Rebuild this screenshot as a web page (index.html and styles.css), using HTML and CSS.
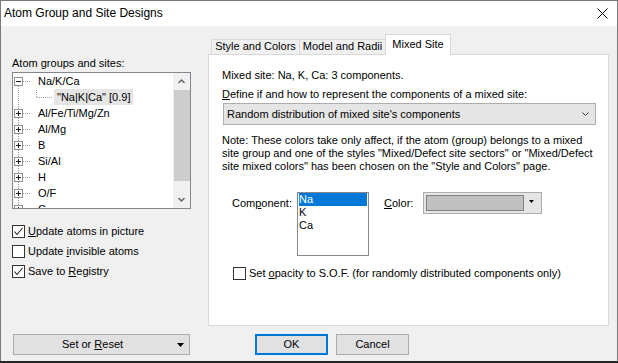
FILE: index.html
```html
<!DOCTYPE html>
<html>
<head>
<meta charset="utf-8">
<title>Atom Group and Site Designs</title>
<link rel="stylesheet" href="styles.css">
</head>
<body>
<div class="window">
  <div class="titlebar">
    <span class="title">Atom Group and Site Designs</span>
    <svg class="close" width="11" height="11" viewBox="0 0 11 11"><path d="M0.5 0.5L10.5 10.5M10.5 0.5L0.5 10.5" stroke="#000" stroke-width="1" fill="none"/></svg>
  </div>
  <div class="client">
    <div class="main">
      <div class="left">
        <div class="groups-label">Atom groups and sites:</div>
        <div class="tree">
          <div class="tree-items">
            <div class="row">
              <svg width="23" height="16"><line x1="5.5" y1="13" x2="5.5" y2="16" class="dot"/><line x1="10" y1="8.5" x2="18" y2="8.5" class="dot"/><rect x="1.5" y="4.5" width="8" height="8" class="bx"/><line x1="3" y1="8.5" x2="8" y2="8.5" class="sign"/></svg>
              <span class="txt">Na/K/Ca</span>
            </div>
            <div class="row child">
              <svg width="41" height="16"><line x1="5.5" y1="1" x2="5.5" y2="16" class="dot"/><line x1="23.5" y1="1" x2="23.5" y2="8" class="dot"/><line x1="24" y1="8.5" x2="40" y2="8.5" class="dot"/></svg>
              <span class="txt">"Na|K|Ca" [0.9]</span>
            </div>
            <div class="row">
              <svg width="23" height="16"><line x1="5.5" y1="1" x2="5.5" y2="4" class="dot"/><line x1="5.5" y1="13" x2="5.5" y2="16" class="dot"/><line x1="10" y1="8.5" x2="18" y2="8.5" class="dot"/><rect x="1.5" y="4.5" width="8" height="8" class="bx"/><line x1="3" y1="8.5" x2="8" y2="8.5" class="sign"/><line x1="5.5" y1="6" x2="5.5" y2="11" class="sign"/></svg>
              <span class="txt">Al/Fe/Ti/Mg/Zn</span>
            </div>
            <div class="row">
              <svg width="23" height="16"><line x1="5.5" y1="1" x2="5.5" y2="4" class="dot"/><line x1="5.5" y1="13" x2="5.5" y2="16" class="dot"/><line x1="10" y1="8.5" x2="18" y2="8.5" class="dot"/><rect x="1.5" y="4.5" width="8" height="8" class="bx"/><line x1="3" y1="8.5" x2="8" y2="8.5" class="sign"/><line x1="5.5" y1="6" x2="5.5" y2="11" class="sign"/></svg>
              <span class="txt">Al/Mg</span>
            </div>
            <div class="row">
              <svg width="23" height="16"><line x1="5.5" y1="1" x2="5.5" y2="4" class="dot"/><line x1="5.5" y1="13" x2="5.5" y2="16" class="dot"/><line x1="10" y1="8.5" x2="18" y2="8.5" class="dot"/><rect x="1.5" y="4.5" width="8" height="8" class="bx"/><line x1="3" y1="8.5" x2="8" y2="8.5" class="sign"/><line x1="5.5" y1="6" x2="5.5" y2="11" class="sign"/></svg>
              <span class="txt">B</span>
            </div>
            <div class="row">
              <svg width="23" height="16"><line x1="5.5" y1="1" x2="5.5" y2="4" class="dot"/><line x1="5.5" y1="13" x2="5.5" y2="16" class="dot"/><line x1="10" y1="8.5" x2="18" y2="8.5" class="dot"/><rect x="1.5" y="4.5" width="8" height="8" class="bx"/><line x1="3" y1="8.5" x2="8" y2="8.5" class="sign"/><line x1="5.5" y1="6" x2="5.5" y2="11" class="sign"/></svg>
              <span class="txt">Si/Al</span>
            </div>
            <div class="row">
              <svg width="23" height="16"><line x1="5.5" y1="1" x2="5.5" y2="4" class="dot"/><line x1="5.5" y1="13" x2="5.5" y2="16" class="dot"/><line x1="10" y1="8.5" x2="18" y2="8.5" class="dot"/><rect x="1.5" y="4.5" width="8" height="8" class="bx"/><line x1="3" y1="8.5" x2="8" y2="8.5" class="sign"/><line x1="5.5" y1="6" x2="5.5" y2="11" class="sign"/></svg>
              <span class="txt">H</span>
            </div>
            <div class="row">
              <svg width="23" height="16"><line x1="5.5" y1="1" x2="5.5" y2="4" class="dot"/><line x1="5.5" y1="13" x2="5.5" y2="16" class="dot"/><line x1="10" y1="8.5" x2="18" y2="8.5" class="dot"/><rect x="1.5" y="4.5" width="8" height="8" class="bx"/><line x1="3" y1="8.5" x2="8" y2="8.5" class="sign"/><line x1="5.5" y1="6" x2="5.5" y2="11" class="sign"/></svg>
              <span class="txt">O/F</span>
            </div>
            <div class="row">
              <svg width="23" height="16"><line x1="5.5" y1="1" x2="5.5" y2="4" class="dot"/><line x1="5.5" y1="13" x2="5.5" y2="16" class="dot"/><line x1="10" y1="8.5" x2="18" y2="8.5" class="dot"/><rect x="1.5" y="4.5" width="8" height="8" class="bx"/><line x1="3" y1="8.5" x2="8" y2="8.5" class="sign"/><line x1="5.5" y1="6" x2="5.5" y2="11" class="sign"/></svg>
              <span class="txt">C</span>
            </div>
          </div>
          <div class="vscroll">
            <div class="sb-btn"><svg width="7" height="5"><polyline points="0.5,4 3.5,1 6.5,4" class="chev"/></svg></div>
            <div class="sb-thumb"></div>
            <div class="sb-track"></div>
            <div class="sb-btn"><svg width="7" height="5"><polyline points="0.5,1 3.5,4 6.5,1" class="chev"/></svg></div>
          </div>
        </div>
        <div class="checks">
          <div class="chk"><span class="box"><svg width="11" height="11"><polyline points="1.5,5.5 4,8.5 9.5,2" class="tick"/></svg></span><span class="chk-text"><u>U</u>pdate atoms in picture</span></div>
          <div class="chk"><span class="box"></span><span class="chk-text">Update <u>i</u>nvisible atoms</span></div>
          <div class="chk"><span class="box"><svg width="11" height="11"><polyline points="1.5,5.5 4,8.5 9.5,2" class="tick"/></svg></span><span class="chk-text">Save to <u>R</u>egistry</span></div>
        </div>
      </div>
      <div class="tabs">
        <div class="tabstrip">
          <div class="tab tab-style">Style and Colors</div>
          <div class="tab tab-model">Model and Radii</div>
          <div class="tab tab-active">Mixed Site</div>
        </div>
        <div class="panel">
          <div class="line">Mixed site: Na, K, Ca: 3 components.</div>
          <div class="line define"><u>D</u>efine if and how to represent the components of a mixed site:</div>
          <div class="combo">
            <span class="combo-text">Random distribution of mixed site's components</span>
            <svg width="7" height="4"><polyline points="0.5,0.5 3.5,3.5 6.5,0.5" class="chev2"/></svg>
          </div>
          <div class="note">Note: These colors take only affect, if the atom (group) belongs to a mixed<br>site group and one of the styles "Mixed/Defect site sectors" or "Mixed/Defect<br>site mixed colors" has been chosen on the "Style and Colors" page.</div>
          <div class="comp-row">
            <div class="comp-label">Com<u>p</u>onent:</div>
            <div class="listbox">
              <div class="item sel">Na</div>
              <div class="item">K</div>
              <div class="item">Ca</div>
            </div>
            <div class="color-label"><u>C</u>olor:</div>
            <div class="colorcombo">
              <div class="swatch"></div>
              <svg class="tri" width="5" height="3"><polygon points="0,0 5,0 2.5,3" fill="#000"/></svg>
            </div>
          </div>
          <div class="opacity-row">
            <span class="box"></span><span class="chk-text">Set <u>o</u>pacity to S.O.F. (for randomly distributed components only)</span>
          </div>
        </div>
      </div>
    </div>
    <div class="buttons">
      <button class="btn btn-menu"><span class="lbl">Set or <u>R</u>eset</span><svg width="7" height="4"><polygon points="0,0 7,0 3.5,4" fill="#000"/></svg></button>
      <button class="btn btn-ok">OK</button>
      <button class="btn btn-cancel">Cancel</button>
    </div>
  </div>
</div>
</body>
</html>
```

FILE: styles.css
```css
* { box-sizing: border-box; }
html, body { margin: 0; padding: 0; }
body {
  width: 618px;
  height: 363px;
  overflow: hidden;
  background: #262626;
  font-family: "Liberation Sans", Arial, sans-serif;
  font-size: 11px;
  line-height: 13px;
  color: #000;
}
.window {
  width: 618px;
  height: 361px;
  background: #f0f0f0;
  border: 1px solid #7a7a7a;
  border-bottom: 0;
  display: flex;
  flex-direction: column;
}
.titlebar {
  flex: none;
  height: 25px;
  background: #fff;
  display: flex;
  align-items: center;
  padding-left: 3px;
}
.title { font-size: 12px; line-height: 15px; }
.close { margin-left: auto; margin-right: 9px; display: block; }
.client { flex: 1; padding: 8px 0 0 11px; }
.main { display: flex; gap: 17px; height: 292px; }

/* left column */
.left { width: 179px; display: flex; flex-direction: column; }
.groups-label { margin-top: 23px; height: 13px; white-space: nowrap; }
.tree {
  margin-top: 2px;
  height: 137px;
  border: 1px solid #828790;
  background: #fff;
  display: flex;
}
.tree-items { width: 160px; overflow: hidden; }
.row { display: flex; height: 16px; flex: none; }
.row svg { display: block; flex: none; }
.row .txt { padding-left: 2px; line-height: 16px; white-space: nowrap; }
.row.child .txt { background: #e5e5e5; padding: 0 3px; }
.dot { stroke: #a0a0a0; stroke-width: 1; stroke-dasharray: 1 1; fill: none; }
.bx { stroke: #919191; fill: #fff; stroke-width: 1; }
.sign { stroke: #1a1a1a; stroke-width: 1; }
.vscroll { width: 17px; background: #f0f0f0; display: flex; flex-direction: column; }
.sb-btn { height: 17px; display: flex; align-items: center; justify-content: center; flex: none; }
.sb-btn svg { display: block; }
.chev { fill: none; stroke: #606060; stroke-width: 1.4; }
.sb-thumb { height: 91px; background: #cdcdcd; margin-left: 1px; flex: none; }
.sb-track { flex: 1; }

.checks { margin-top: 12px; display: flex; flex-direction: column; }
.chk { display: flex; height: 20px; align-items: flex-start; }
.box {
  width: 13px;
  height: 13px;
  border: 1px solid #333;
  background: #fff;
  flex: none;
  display: block;
}
.box svg { display: block; }
.tick { fill: none; stroke: #222; stroke-width: 1.1; }
.chk .box { margin-top: 4px; }
.chk-text { margin-left: 3px; white-space: nowrap; }
.chk .chk-text { margin-top: 4px; }

/* tabs */
.tabs { width: 401px; display: flex; flex-direction: column; }
.tabstrip {
  height: 21px;
  margin-bottom: -1px;
  display: flex;
  align-items: flex-end;
  padding-left: 3px;
  position: relative;
  z-index: 1;
}
.tab {
  height: 15px;
  margin-bottom: 1px;
  border-top: 1px solid #d9d9d9;
  background: #f0f0f0;
  text-align: center;
  line-height: 13px;
  white-space: nowrap;
}
.tab-style { width: 89px; border-left: 1px solid #d9d9d9; border-right: 1px solid #d9d9d9; }
.tab-model { width: 85px; }
.tab-active {
  width: 66px;
  height: 21px;
  margin-bottom: 0;
  background: #fff;
  border: 1px solid #d9d9d9;
  border-bottom: 0;
  padding-top: 3px;
}
.panel {
  height: 272px;
  border: 1px solid #d9d9d9;
  background: #fff;
  padding: 14px 0 0 13px;
}
.line { height: 13px; white-space: nowrap; }
.define { margin-top: 6px; }
.combo {
  margin: 2px 0 0 1px;
  width: 373px;
  height: 22px;
  border: 1px solid #adadad;
  background: #e5e5e5;
  display: flex;
  align-items: center;
  padding-left: 3px;
}
.combo-text { flex: 1; white-space: nowrap; }
.combo svg { display: block; margin-right: 6px; }
.chev2 { fill: none; stroke: #333; stroke-width: 1; }
.note { margin-top: 9px; white-space: nowrap; }
.comp-row { margin-top: 19px; display: flex; align-items: flex-start; padding-left: 10px; }
.comp-label { width: 65px; margin-top: 5px; white-space: nowrap; }
.listbox { width: 72px; height: 64px; border: 1px solid #828790; background: #fff; }
.item { height: 13px; margin: 0 1px; line-height: 13px; }
.item.sel { background: #0078d7; color: #fff; }
.color-label { width: 39px; margin-left: 15px; margin-top: 5px; }
.colorcombo {
  width: 119px;
  height: 22px;
  border: 1px solid #adadad;
  background: #e5e5e5;
  display: flex;
  align-items: flex-start;
  padding: 2px 0 0 2px;
}
.swatch { width: 98px; height: 16px; border: 1px solid #808080; background: #c0c0c0; }
.tri { display: block; margin: 5px 0 0 5px; }
.opacity-row { margin-top: 11px; display: flex; padding-left: 11px; height: 13px; }

/* buttons */
.buttons { display: flex; margin-top: 8px; height: 21px; }
.btn {
  height: 21px;
  border: 1px solid #adadad;
  background: #e1e1e1;
  font-family: inherit;
  font-size: 11px;
  line-height: 13px;
  color: #000;
  padding: 0;
  margin: 0;
  display: flex;
  align-items: center;
  justify-content: center;
}
.btn-menu { width: 177px; margin-left: 1px; }
.btn-menu .lbl { flex: 1; text-align: center; }
.btn-menu svg { display: block; margin: 0 5px 0 6px; }
.btn-ok { width: 73px; margin-left: 65px; border: 2px solid #0078d7; }
.btn-cancel { width: 73px; margin-left: 8px; }
```
